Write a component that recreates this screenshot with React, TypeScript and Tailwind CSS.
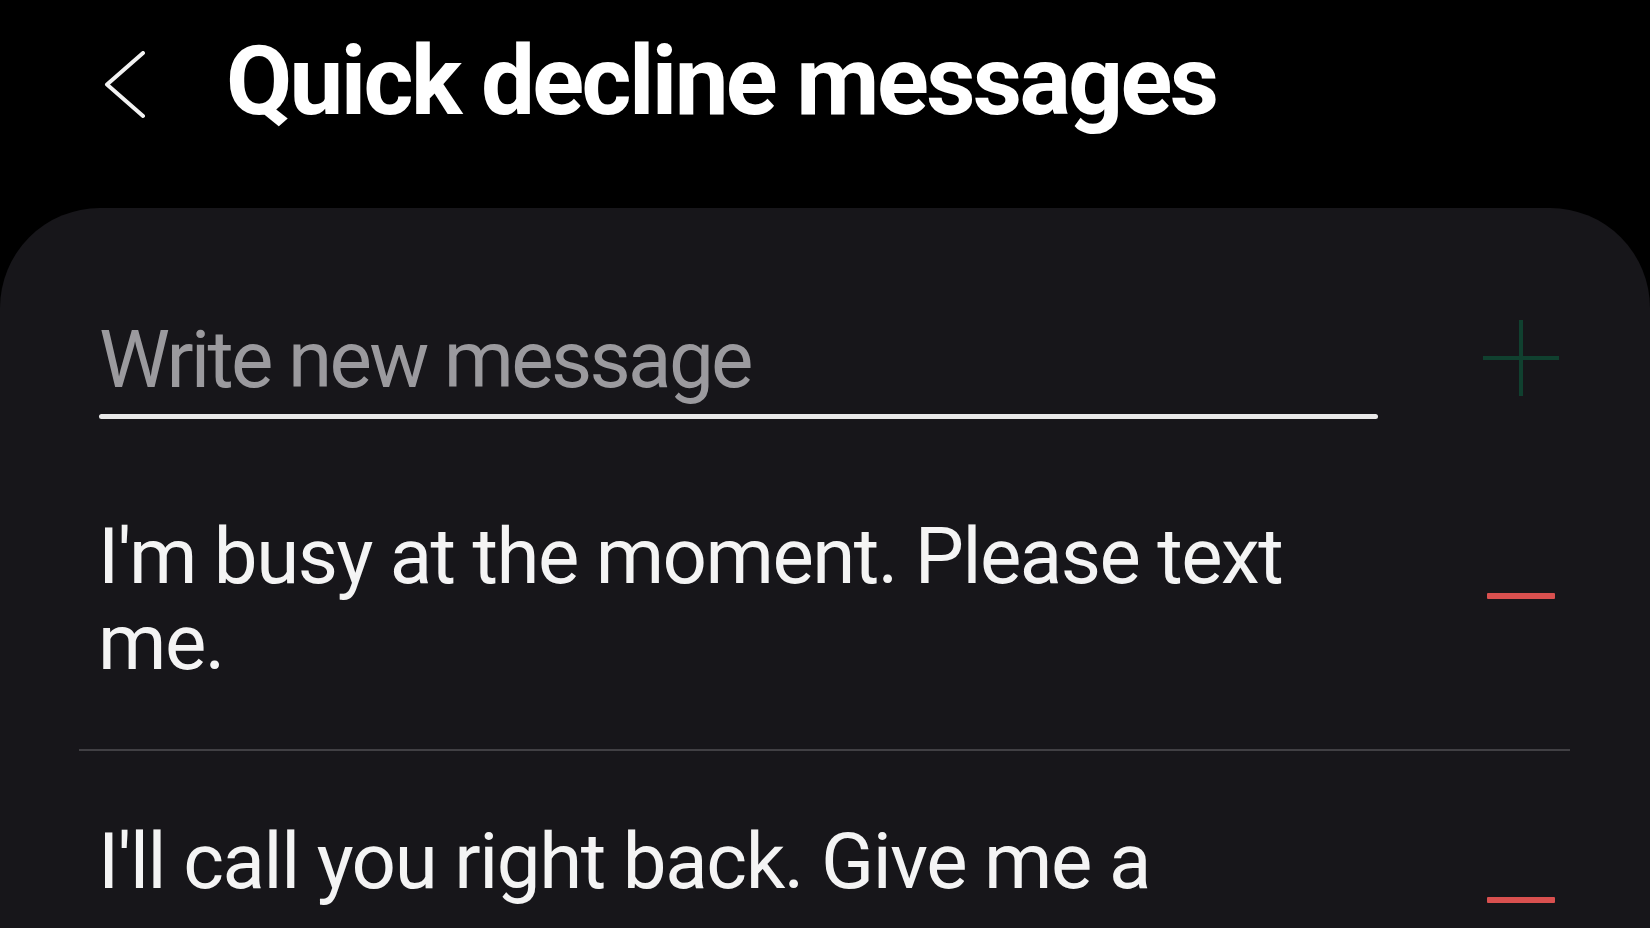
import React from "react";

export default function App() {
  return (
    <div className="w-[1650px] h-[928px] bg-black overflow-hidden font-['Roboto','Noto_Sans',sans-serif]">
      <header className="h-[208px] flex items-start">
        <svg
          className="ml-[103px] mt-[51px] shrink-0"
          width="46"
          height="68"
          viewBox="0 0 46 68"
          fill="none"
        >
          <polyline
            points="40,2 4,33.5 40,65"
            stroke="#f2f2f2"
            strokeWidth="4"
            strokeLinecap="round"
            strokeLinejoin="round"
          />
        </svg>
        <h1 className="ml-[77px] mt-[33px] text-[96px] leading-none font-bold text-white tracking-[-2.6px] whitespace-nowrap">
          Quick decline messages
        </h1>
      </header>

      <main className="h-[720px] bg-[#17161a] rounded-t-[100px] pt-[112px]">
        <div className="flex items-start pl-[99px]">
          <div className="w-[1279px]">
            <div className="text-[80px] leading-none text-[#9b9a9e] tracking-[-2.7px] whitespace-nowrap">
              Write new message
            </div>
            <div className="mt-[14px] h-[5px] bg-[#e9e9e9] rounded-full" />
          </div>
          <svg
            className="ml-[103px] mt-[-2px] shrink-0"
            width="80"
            height="80"
            viewBox="0 0 80 80"
          >
            <rect x="38" y="2" width="4" height="76" fill="#10402f" />
            <rect x="2" y="38" width="76" height="4" fill="#10402f" />
          </svg>
        </div>

        <div className="flex items-start pl-[98px] mt-[95px]">
          <p className="w-[1260px] text-[78px] leading-[86px] text-[#f4f4f4] tracking-[-1.5px]">
            I'm busy at the moment. Please text
            <br />
            me.
          </p>
          <div className="ml-[129px] mt-[79px] w-[68px] h-[6px] bg-[#d9504f] rounded-[1px] shrink-0" />
        </div>

        <div className="ml-[79px] mr-[80px] mt-[63px] h-[2px] bg-[#414044]" />

        <div className="flex items-start pl-[98px] mt-[68px]">
          <p className="w-[1260px] text-[78px] leading-[86px] text-[#f4f4f4] tracking-[-1.4px] whitespace-nowrap">
            I'll call you right back. Give me a
          </p>
          <div className="ml-[129px] mt-[78px] w-[68px] h-[6px] bg-[#d9504f] rounded-[1px] shrink-0" />
        </div>
      </main>
    </div>
  );
}
